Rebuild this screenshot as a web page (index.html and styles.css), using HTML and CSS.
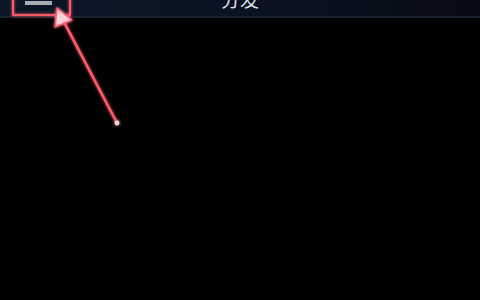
FILE: index.html
```html
<!DOCTYPE html>
<html>
<head>
<meta charset="utf-8">
<link rel="stylesheet" href="styles.css">
</head>
<body>
<div class="screen">
  <header class="bar">
    <div class="menu"><span class="menu-line"></span></div>
    <div class="title">分发</div>
    <div class="spacer"></div>
  </header>
  <main class="content"></main>
  <svg class="annot" width="480" height="300" viewBox="0 0 480 300">
    <defs>
      <filter id="glow" x="-20%" y="-20%" width="140%" height="140%">
        <feGaussianBlur stdDeviation="1.4" result="b"/>
        <feMerge><feMergeNode in="b"/><feMergeNode in="SourceGraphic"/></feMerge>
      </filter>
    </defs>
    <g filter="url(#glow)">
      <rect x="13" y="-6" width="57" height="21" fill="none" stroke="#ff5a6a" stroke-width="2"/>
      <line x1="117" y1="123" x2="64" y2="22" stroke="#ff5a6a" stroke-width="2.5" stroke-linecap="round"/>
      <polygon points="57,8 55,27 72,20" fill="#ffd0d6" stroke="#ff5a6a" stroke-width="1.5" stroke-linejoin="round"/>
      <circle cx="117" cy="123" r="2.4" fill="#ffd0d6"/>
    </g>
  </svg>
</div>
</body>
</html>
```
FILE: styles.css
```css
html, body {
  margin: 0;
  padding: 0;
  background: #000;
}
.screen {
  position: relative;
  width: 480px;
  height: 300px;
  overflow: hidden;
  background: #000;
  font-family: "Noto Sans CJK SC", "Noto Sans", sans-serif;
}
.bar {
  display: flex;
  align-items: flex-end;
  height: 38px;
  margin-top: -20px;
  background: linear-gradient(90deg, #0b1626 0%, #0a1322 50%, #060a14 100%);
  border-bottom: 2px solid #1b2330;
  box-sizing: border-box;
}
.menu {
  width: 60px;
  height: 38px;
  display: flex;
  justify-content: center;
  align-items: flex-end;
  padding-left: 17px;
  box-sizing: border-box;
}
.menu-line {
  display: block;
  width: 27px;
  height: 4px;
  background: #a7abb2;
  margin-bottom: 11px;
}
.title {
  flex: 1;
  text-align: center;
  color: #dfe3ea;
  font-size: 19px;
  line-height: 19px;
  margin-bottom: 8px;
  padding-left: 60px;
}
.spacer {
  width: 120px;
}
.content {
  height: 282px;
}
.annot {
  position: absolute;
  left: 0;
  top: 0;
}
```
